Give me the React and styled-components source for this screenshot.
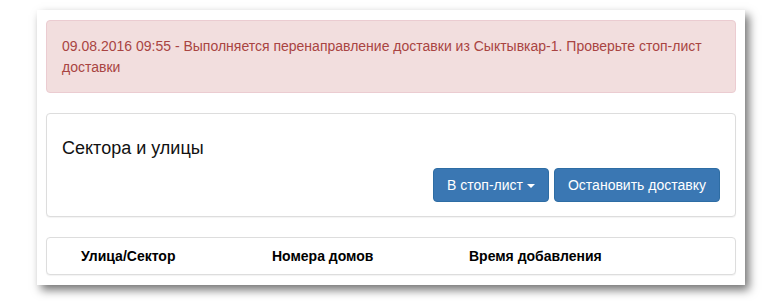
import React from "react";
import styled, { createGlobalStyle } from "styled-components";

const GlobalStyle = createGlobalStyle`
    html, body {
        margin: 0;
        padding: 0;
        background: #ffffff;
        font-family: "Liberation Sans", Arial, sans-serif;
        font-size: 14px;
        color: #333333;
    }
`;

const Page = styled.div`
    min-height: 301px;
    box-sizing: border-box;
    padding: 10px 35px 16px 37px;
`;

const Window = styled.div`
    width: 708px;
    height: 275px;
    box-sizing: border-box;
    background: #ffffff;
    padding: 10px 9px 0 9px;
    box-shadow: 4px 5px 9px rgba(0, 0, 0, 0.55);
    display: flex;
    flex-direction: column;
    gap: 20px;
`;

const Alert = styled.div`
    box-sizing: border-box;
    height: 73px;
    padding: 15px 15px;
    background: #f2dede;
    border: 1px solid #ebccd1;
    border-radius: 4px;
    color: #a94442;
    font-size: 14px;
    line-height: 21px;
`;

const Panel = styled.div`
    box-sizing: border-box;
    border: 1px solid #dddddd;
    border-radius: 4px;
    background: #ffffff;
    box-shadow: 0 1px 1px rgba(0, 0, 0, 0.05);
`;

const Heading = styled.div`
    padding: 23px 15px 0 15px;
    font-size: 18px;
    line-height: 22px;
    color: #111111;
`;

const Toolbar = styled.div`
    display: flex;
    justify-content: flex-end;
    gap: 5px;
    padding: 9px 15px 14px 15px;
`;

const Button = styled.button`
    height: 34px;
    padding: 0 13px;
    border: 1px solid #2e6da4;
    border-radius: 4px;
    background: #3a77b3;
    color: #ffffff;
    font-family: "Liberation Sans", Arial, sans-serif;
    font-size: 14px;
    display: flex;
    align-items: center;
    gap: 4px;
`;

const Caret = styled.span`
    display: inline-block;
    width: 0;
    height: 0;
    border-top: 4px solid #ffffff;
    border-left: 4px solid transparent;
    border-right: 4px solid transparent;
    margin-top: 1px;
`;

const HeaderRow = styled.div`
    display: grid;
    grid-template-columns: 191px 197px 1fr;
    height: 36px;
    align-items: center;
    padding-left: 34px;
    font-weight: bold;
    font-size: 14px;
    color: #000000;
`;

const App = () => {
    return (
        <>
            <GlobalStyle />
            <Page>
                <Window>
                    <Alert>
                        09.08.2016 09:55 - Выполняется перенаправление доставки из Сыктывкар-1. Проверьте стоп-лист доставки
                    </Alert>
                    <Panel>
                        <Heading>Сектора и улицы</Heading>
                        <Toolbar>
                            <Button>
                                В стоп-лист <Caret />
                            </Button>
                            <Button>Остановить доставку</Button>
                        </Toolbar>
                    </Panel>
                    <Panel>
                        <HeaderRow>
                            <div>Улица/Сектор</div>
                            <div>Номера домов</div>
                            <div>Время добавления</div>
                        </HeaderRow>
                    </Panel>
                </Window>
            </Page>
        </>
    );
};

export default App;
